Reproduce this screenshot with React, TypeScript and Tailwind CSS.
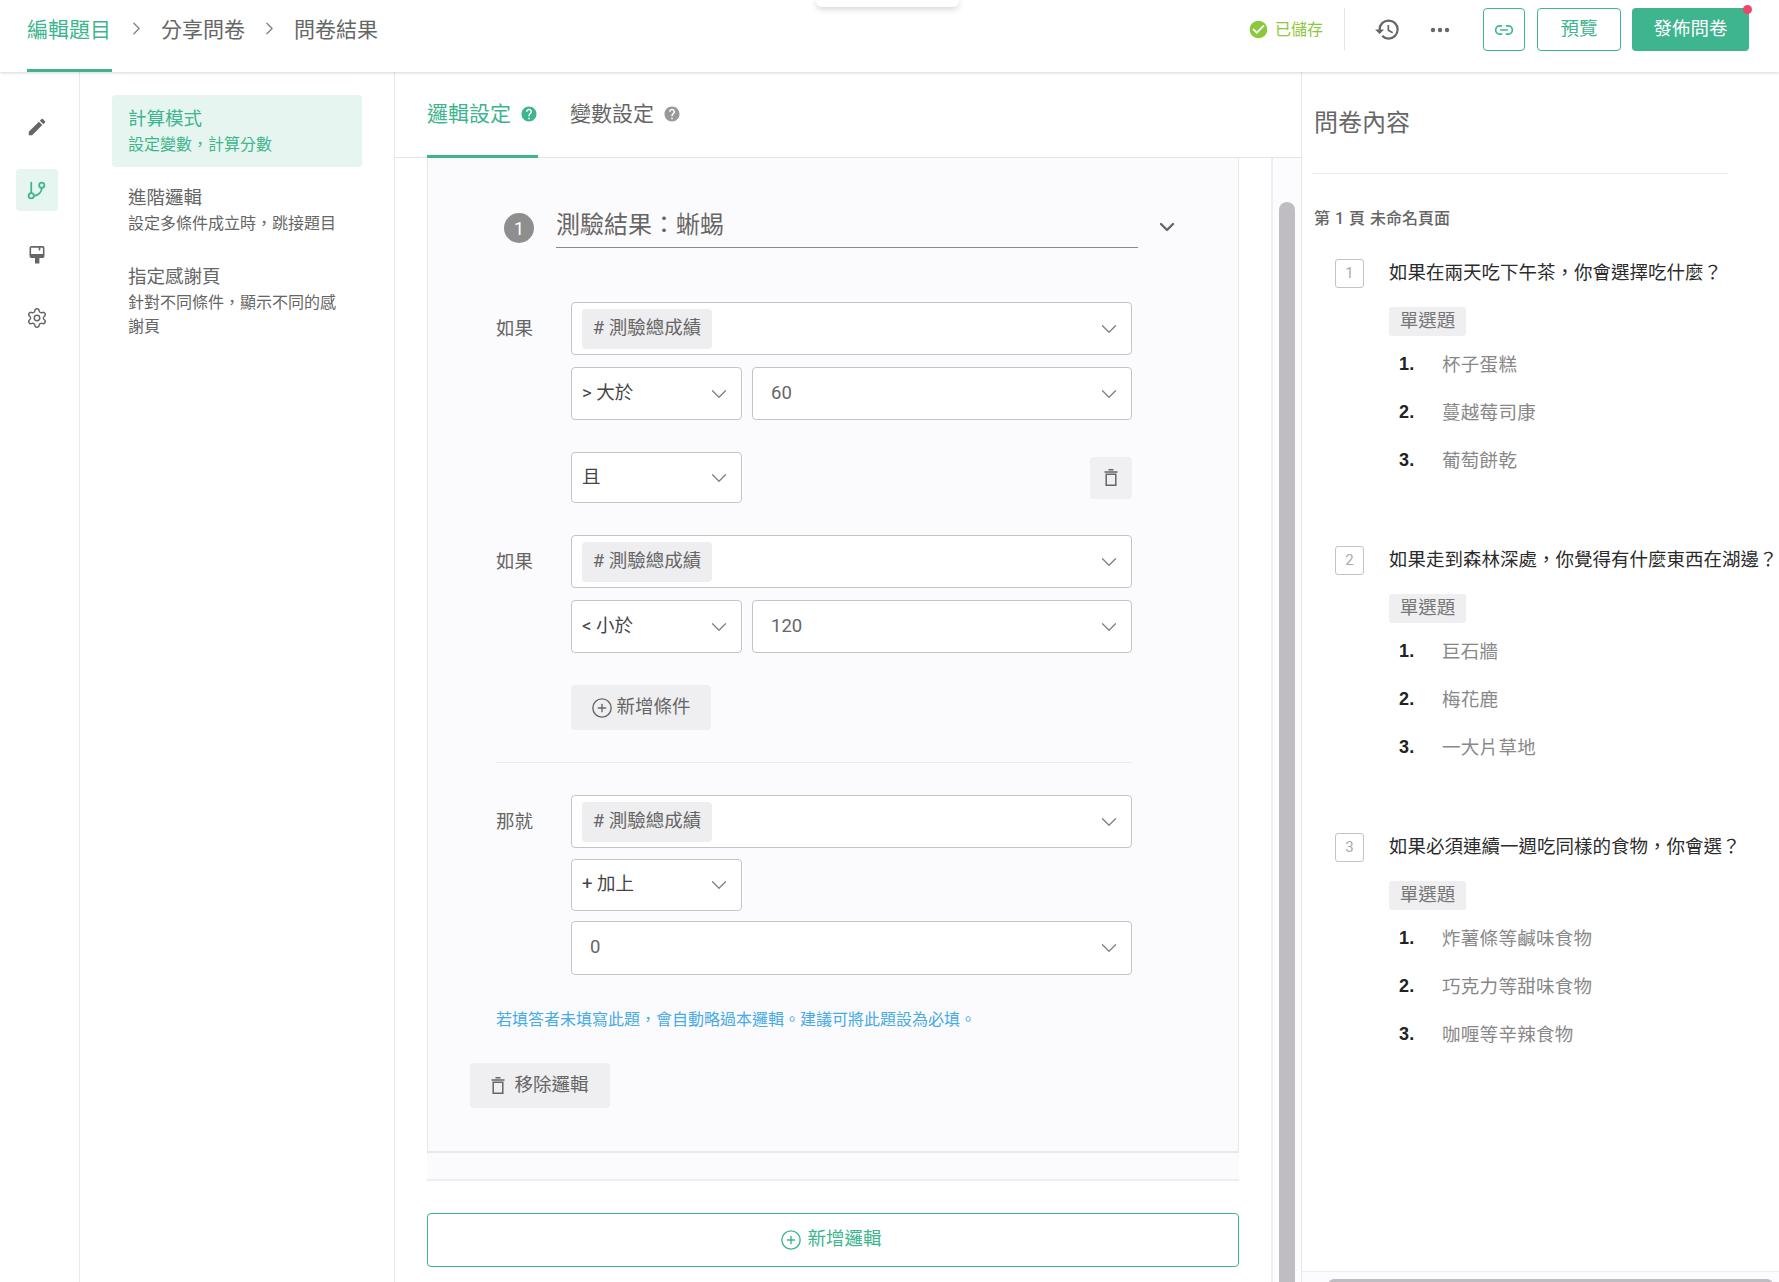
import { ChevronDown, ChevronRight, CirclePlus, GitBranch, Link2, Settings } from "lucide-react";
import { MdCheckCircle, MdEdit, MdHelp, MdHistory } from "react-icons/md";

const QUESTIONS = [
  { title: "如果在兩天吃下午茶，你會選擇吃什麼？", options: ["杯子蛋糕", "蔓越莓司康", "葡萄餅乾"] },
  { title: "如果走到森林深處，你覺得有什麼東西在湖邊？", options: ["巨石牆", "梅花鹿", "一大片草地"] },
  { title: "如果必須連續一週吃同樣的食物，你會選？", options: ["炸薯條等鹹味食物", "巧克力等甜味食物", "咖喱等辛辣食物"] },
];

function TrashIcon() {
  return (
    <svg viewBox="0 0 14 17" fill="none" stroke="currentColor" strokeWidth="1.5" className="h-[17px] w-[14px] shrink-0">
      <path d="M4.5 0.8h5M0.5 3h13M2.2 5.2h9.6v11H2.2z" />
    </svg>
  );
}

function PaintIcon() {
  return (
    <svg viewBox="0 0 16 18" className="h-[18px] w-[16px]" fill="none" stroke="#666" strokeWidth="1.6">
      <path d="M2.3 0.9h11.4a1 1 0 0 1 1 1v8.3a1 1 0 0 1-1 1H2.3a1 1 0 0 1-1-1V1.900a1 1 0 0 1 1-1z" />
      <path d="M1.500 8h13v3H1.500z" fill="#666" stroke="none" />
      <path d="M6 11h4.400v6.500H6z" fill="#666" stroke="none" />
      <path d="M10.500 1v3.500" />
    </svg>
  );
}

function Chip({ children }: { children: string }) {
  return (
    <span className="flex h-[40px] w-[130px] items-center justify-center rounded-[4px] bg-[#eeedef] text-[18.5px] text-[#666]">
      {children}
    </span>
  );
}

function Select({ className, children }: { className: string; children: React.ReactNode }) {
  return (
    <div className={`flex items-center justify-between rounded-[4px] border border-[#c4c3c6] bg-white pl-[10px] pr-[9px] text-[18.5px] ${className}`}>
      {children}
      <ChevronDown size={26} strokeWidth={1.2} className="shrink-0 text-[#808080]" />
    </div>
  );
}

function Condition({ label, op, value }: { label: string; op: string; value: string }) {
  return (
    <div className="flex">
      <span className="w-[75px] pt-[13px] text-[18.5px] leading-[28px] text-[#666]">{label}</span>
      <div className="flex flex-1 flex-col">
        <Select className="h-[53px]">
          <Chip># 測驗總成績</Chip>
        </Select>
        <div className="mt-[12px] flex gap-[10px]">
          <Select className="h-[53px] w-[171px] pt-[1px] text-[#444]">{op}</Select>
          <Select className="h-[53px] flex-1 !pl-[18px] text-[#666]">{value}</Select>
        </div>
      </div>
    </div>
  );
}

function MenuItem({ title, desc, active }: { title: string; desc: string; active?: boolean }) {
  return (
    <div className={`h-[72px] w-[250px] rounded-[4px] px-[16px] ${active ? "bg-[#e6f5f0] text-[#3eb58e]" : "text-[#666]"}`}>
      <div className="pt-[11px] text-[18.5px] leading-[27px]">{title}</div>
      <div className="text-[16px] leading-[24px]">{desc}</div>
    </div>
  );
}

export default function App() {
  return (
    <div className="relative flex h-[1282px] w-[1779px] flex-col overflow-hidden bg-white font-['Roboto','Noto_Sans_CJK_TC',sans-serif]">
      {/* sheet peeking in from the top edge */}
      <div className="absolute left-[816px] top-0 z-20 h-[7px] w-[143px] rounded-b-[6px] bg-white shadow-[0_2px_6px_rgba(0,0,0,0.18)]" />

      <header className="relative z-10 flex h-[72px] shrink-0 items-start justify-between bg-white pl-[27px] pr-[30px] shadow-[0_1px_3px_rgba(0,0,0,0.16)]">
        <nav className="flex h-full items-start gap-[14px] text-[21px] leading-[30px] text-[#666]">
          <span className="h-full w-[85px] border-b-[3px] border-[#3eb58e] pt-[15px] text-[#3eb58e]">編輯題目</span>
          <ChevronRight size={21} strokeWidth={1.5} className="mt-[18px] text-[#808080]" />
          <span className="pt-[15px]">分享問卷</span>
          <ChevronRight size={21} strokeWidth={1.5} className="mt-[18px] text-[#808080]" />
          <span className="pt-[15px]">問卷結果</span>
        </nav>

        <div className="flex items-center pt-[8px]">
          <MdCheckCircle size={21} className="text-[#8cc83c]" />
          <span className="ml-[6px] text-[16px] text-[#8cc83c]">已儲存</span>
          <div className="ml-[21px] h-[43px] w-px bg-[#e6e6e6]" />
          <MdHistory size={27} className="ml-[29px] text-[#666]" />
          <svg viewBox="0 0 20 6" className="ml-[29px] w-[20px] text-[#666]" fill="currentColor">
            <circle cx="3" cy="3" r="2.2" />
            <circle cx="10" cy="3" r="2.2" />
            <circle cx="17" cy="3" r="2.2" />
          </svg>
          <button className="ml-[33px] flex h-[43px] w-[42px] items-center justify-center rounded-[4px] border border-[#3eb58e] text-[#3eb58e]">
            <Link2 size={20} strokeWidth={2} />
          </button>
          <button className="ml-[12px] h-[43px] w-[84px] rounded-[4px] border border-[#3eb58e] text-[18.5px] text-[#3eb58e]">預覽</button>
          <button className="relative ml-[11px] h-[43px] w-[117px] rounded-[4px] bg-[#3eb58e] text-[18.5px] text-white">
            發佈問卷
            <span className="absolute right-[-3px] top-[-3px] h-[9px] w-[9px] rounded-full bg-[#f0456a]" />
          </button>
        </div>
      </header>

      <div className="flex min-h-0 flex-1">
        <aside className="flex w-[80px] shrink-0 flex-col items-center border-r border-[#e8e8e8] pr-[6px] pt-[44px] text-[#666]">
          <MdEdit size={22} />
          <div className="mt-[31px] flex h-[42px] w-[42px] items-center justify-center rounded-[4px] bg-[#e6f5f0] text-[#3eb58e]">
            <GitBranch size={21} strokeWidth={2} />
          </div>
          <div className="mt-[34px] flex h-[20px] items-center">
            <PaintIcon />
          </div>
          <Settings size={22} strokeWidth={1.6} className="mt-[42px]" />
        </aside>

        <section className="w-[315px] shrink-0 border-r border-[#e8e8e8] pl-[32px] pt-[23px]">
          <MenuItem title="計算模式" desc="設定變數，計算分數" active />
          <div className="mt-[7px] flex flex-col gap-[7px]">
            <MenuItem title="進階邏輯" desc="設定多條件成立時，跳接題目" />
            <MenuItem title="指定感謝頁" desc="針對不同條件，顯示不同的感謝頁" />
          </div>
        </section>

        <main className="flex w-[907px] shrink-0 flex-col border-r border-[#e8e8e8]">
          <div className="flex h-[86px] shrink-0 items-start gap-[32px] border-b border-[#e4e4e4] pl-[32px]">
            <div className="flex h-[86px] w-[111px] items-start gap-[9px] border-b-[3px] border-[#3eb58e] pt-[27px] text-[21px] leading-[30px] text-[#3eb58e]">
              <span className="whitespace-nowrap">邏輯設定</span>
              <MdHelp size={18} className="mt-[6px] shrink-0" />
            </div>
            <div className="flex items-start gap-[9px] pt-[27px] text-[21px] leading-[30px] text-[#666]">
              <span className="whitespace-nowrap">變數設定</span>
              <MdHelp size={18} className="mt-[6px] shrink-0 text-[#999]" />
            </div>
          </div>

          <div className="flex min-h-0 flex-1">
            <div className="w-[876px] shrink-0 px-[32px]">
              <div className="border-x border-b-2 border-[#e8e7ea] bg-[#fbfafc] pb-[43px] pl-[68px] pr-[106px] pt-[54px]">
                <div className="relative ml-[8px] mr-[-6px] flex h-[36px] items-center gap-[22px]">
                  <span className="mb-[4px] flex h-[30px] w-[30px] items-center justify-center rounded-full bg-[#8e8e8e] text-[18px] text-white">1</span>
                  <span className="flex h-full flex-1 items-center border-b border-[#8a8a8a] pb-[9px] text-[24px] leading-[28px] text-[#666]">測驗結果：蜥蜴</span>
                  <ChevronDown size={24} strokeWidth={2.4} className="absolute right-[-41px] top-[3px] text-[#666]" />
                </div>

                <div className="mt-[54px]">
                  <Condition label="如果" op="> 大於" value="60" />
                </div>

                <div className="ml-[75px] mt-[32px] flex items-center justify-between">
                  <Select className="h-[51px] w-[171px] text-[#444]">且</Select>
                  <button className="flex h-[42px] w-[42px] items-center justify-center rounded-[4px] bg-[#f0eff1] text-[#666]">
                    <TrashIcon />
                  </button>
                </div>

                <div className="mt-[32px]">
                  <Condition label="如果" op="< 小於" value="120" />
                </div>

                <button className="ml-[75px] mt-[32px] flex h-[45px] w-[140px] items-center justify-center gap-[3px] rounded-[4px] bg-[#efeef0] text-[18.5px] text-[#666]">
                  <CirclePlus size={22} strokeWidth={1.5} />
                  新增條件
                </button>

                <div className="mt-[32px] h-px bg-[#eceaee]" />

                <div className="mt-[32px] flex">
                  <span className="w-[75px] pt-[13px] text-[18.5px] leading-[28px] text-[#666]">那就</span>
                  <div className="flex flex-1 flex-col">
                    <Select className="h-[53px]">
                      <Chip># 測驗總成績</Chip>
                    </Select>
                    <Select className="mt-[11px] h-[52px] w-[171px] text-[#444]">+ 加上</Select>
                    <Select className="mt-[10px] h-[54px] !pl-[18px] text-[#666]">0</Select>
                  </div>
                </div>

                <p className="mt-[33px] whitespace-nowrap text-[16px] leading-[24px] text-[#46abe6]">
                  若填答者未填寫此題，會自動略過本邏輯。建議可將此題設為必填。
                </p>

                <button className="ml-[-26px] mt-[31px] flex h-[45px] w-[140px] items-center justify-center gap-[9px] rounded-[4px] bg-[#efeef0] text-[18.5px] text-[#666]">
                  <TrashIcon />
                  移除邏輯
                </button>
              </div>

              <div className="h-[28px] border-b-2 border-[#eeedf0] bg-[#fbfafc]" />

              <button className="mt-[32px] flex h-[54px] w-full items-center justify-center gap-[5px] rounded-[4px] border border-[#3eb58e] pr-[4px] text-[18.5px] text-[#3eb58e]">
                <CirclePlus size={22} strokeWidth={1.5} />
                新增邏輯
              </button>
            </div>

            <div className="flex-1 border-l-2 border-[#eeedf0] bg-[#fcfbfd] pl-[6px] pt-[44px]">
              <div className="h-full w-[16px] rounded-t-full bg-[#bfbdc1]" />
            </div>
          </div>
        </main>

        <section className="flex min-w-0 flex-1 flex-col">
          <div className="min-h-0 flex-1 overflow-hidden">
            <h2 className="pl-[12px] pt-[35px] text-[24px] leading-[32px] text-[#666]">問卷內容</h2>
            <div className="ml-[10px] mt-[34px] h-px w-[416px] bg-[#ececec]" />
            <div className="pl-[12px] pt-[33px] text-[16px] font-medium leading-[24px] text-[#666] [word-spacing:1px]">第 1 頁 未命名頁面</div>

            <div className="ml-[33px] mt-[28px] flex flex-col gap-[62px]">
              {QUESTIONS.map((q, i) => (
                <div key={q.title} className="flex gap-[25px]">
                  <span className="flex h-[29px] w-[29px] shrink-0 items-center justify-center rounded-[3px] border border-[#c4c4c4] text-[15px] text-[#aaa]">
                    {i + 1}
                  </span>
                  <div>
                    <div className="whitespace-nowrap text-[18.5px] leading-[28px] text-[#2b2b2b]">{q.title}</div>
                    <div className="mt-[20px] flex h-[29px] w-[77px] items-center justify-center rounded-[3px] bg-[#efeef0] text-[18.5px] text-[#777]">單選題</div>
                    <ol className="mt-[4px]">
                      {q.options.map((option, n) => (
                        <li key={option} className="flex h-[48px] items-center pt-[3px] text-[18.5px] tracking-[0.3px] text-[#888]">
                          <span className="mb-[2px] ml-[10px] w-[43px] font-['Liberation_Sans',sans-serif] text-[18px] font-bold text-[#222]">{n + 1}.</span>
                          {option}
                        </li>
                      ))}
                    </ol>
                  </div>
                </div>
              ))}
            </div>
          </div>

          <div className="h-[11px] shrink-0 overflow-hidden border-t border-[#eeedf0] bg-[#fcfbfd] pl-[26px] pr-[6px] pt-[7px]">
            <div className="h-[12px] rounded-full bg-[#bfbdc1]" />
          </div>
        </section>
      </div>
    </div>
  );
}
